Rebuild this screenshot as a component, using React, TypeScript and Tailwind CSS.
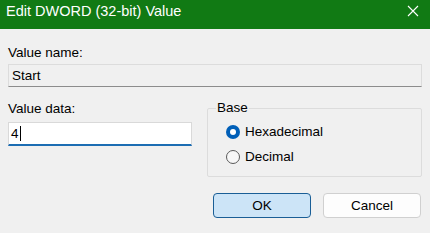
import React from "react";

export default function App() {
  const font = { fontFamily: '"Liberation Sans", Arial, sans-serif' };
  return (
    <div
      className="w-[430px] h-[233px] bg-[#f0f0f0] text-[13.5px] leading-[16px] text-black overflow-hidden"
      style={font}
    >
      {/* Title bar */}
      <div className="h-[29px] bg-[#117a14] flex items-start justify-between pl-[6px] pr-[11px]">
        <div className="pt-[3px] text-[14.5px] leading-[17px] text-white">Edit DWORD (32-bit) Value</div>
        <svg width="12" height="12" viewBox="0 0 12 12" className="mt-[5px]">
          <path d="M1 1 L11 11 M11 1 L1 11" stroke="#ffffff" strokeWidth="1.1" fill="none" />
        </svg>
      </div>

      <div className="pl-[8px] pr-[8px]">
        <div className="mt-[16px]">Value name:</div>
        <div className="mt-[3px] h-[23px] border border-[#dcdcdc] border-b-[#8c8c8c] bg-[#f0f0f0] flex items-center pl-[3px]">
          Start
        </div>

        <div className="mt-[14px] flex items-start">
          <div className="w-[184px] shrink-0">
            <div>Value data:</div>
            <div className="mt-[5px] h-[24px] bg-white border border-[#d9d9d9] border-b-2 border-b-[#1c6db3] flex items-center pl-[2px]">
              <span>4</span>
              <span className="ml-[1px] w-px h-[15px] bg-black" />
            </div>
          </div>
          <fieldset className="ml-[15px] -mt-[1px] w-[215px] border border-[#dcdcdc] rounded-[2px] pl-[18px] pb-[11px]">
            <legend className="ml-[-10px] px-[1px] leading-[16px]">Base</legend>
            <div className="mt-[8px] flex flex-col gap-[9px]">
              <div className="h-[16px] flex items-center">
                <span className="w-[14px] h-[14px] rounded-full bg-[#005fb8] flex items-center justify-center">
                  <span className="w-[6px] h-[6px] rounded-full bg-white" />
                </span>
                <span className="ml-[5px]">Hexadecimal</span>
              </div>
              <div className="h-[16px] flex items-center">
                <span className="w-[14px] h-[14px] rounded-full border border-[#5a5a5a] bg-[#f7f7f7]" />
                <span className="ml-[5px]">Decimal</span>
              </div>
            </div>
          </fieldset>
        </div>

        <div className="mt-[16px] flex justify-end gap-[12px] pr-[1px]">
          <button className="w-[98px] h-[25px] rounded-[4px] border border-[#1a5e96] bg-[#cce4f7] flex items-center justify-center">
            OK
          </button>
          <button className="w-[98px] h-[25px] rounded-[4px] border border-[#d0d0d0] bg-[#fdfdfd] flex items-center justify-center">
            Cancel
          </button>
        </div>
      </div>
    </div>
  );
}
